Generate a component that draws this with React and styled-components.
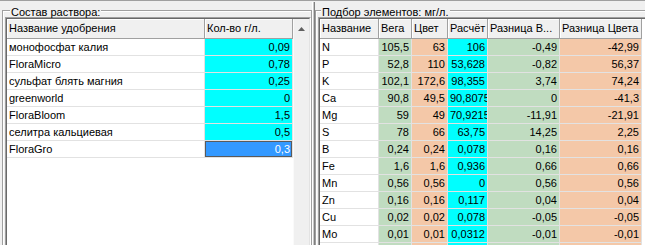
import React from 'react';
import styled, { createGlobalStyle } from 'styled-components';

const GlobalStyle = createGlobalStyle`
  body{
    margin: 0;
    background: #f0f0f0;
    font-family: "Liberation Sans", Arial, sans-serif;
    font-size: 11px;
    color: #000000;
  }
`

const colors = {
  cyan: '#00ffff',
  green: '#c0dcc0',
  peach: '#f4c8a8',
  white: '#ffffff',
}

const WindowStyle = styled.div`
  width: 645px;
  height: 245px;
  box-sizing: border-box;
  overflow: hidden;
  display: flex;
  align-items: flex-start;
  padding: 1px 0 0 2px;
  border-top: 1px solid #a0a0a0;
  background: #f0f0f0;
`

const GroupBox = styled.fieldset`
  flex: none;
  box-sizing: border-box;
  width: ${({ $width }) => $width}px;
  height: 270px;
  margin: 0;
  padding: 0 0 0 ${({ $pad }) => $pad}px;
  min-width: 0;
  border: 1px solid #a0a0a0;
  box-shadow: inset 1px 1px 0 #ffffff;
`

const GroupTitle = styled.legend`
  margin-left: ${({ $offset }) => $offset}px;
  padding: 4px 1px 0;
  line-height: 12px;
  background: #f0f0f0;
`

const Splitter = styled.div`
  flex: none;
  align-self: stretch;
  width: 3px;
  box-sizing: border-box;
  border-left: 1px solid #ffffff;
  border-right: 1px solid #808080;
  background: #c8c8c8;
`

const GridFrame = styled.div`
  display: flex;
  box-sizing: border-box;
  margin-top: -1px;
  height: 240px;
  border: 1px solid;
  border-color: #a0a0a0 #ffffff #ffffff #a0a0a0;
`

const GridInner = styled.div`
  display: flex;
  flex: 1;
  min-width: 0;
  background: #ffffff;
  border: 1px solid;
  border-color: #696969 #e3e3e3 #e3e3e3 #696969;
`

const Table = styled.div`
  flex: none;
  display: grid;
  grid-template-columns: ${({ $cols }) => $cols.map(c => c + 'px').join(' ')};
  grid-template-rows: 20px;
  grid-auto-rows: 17px;
  align-content: start;
`

const Cell = styled.div`
  box-sizing: border-box;
  padding: 0 2px;
  line-height: 16px;
  white-space: nowrap;
  overflow: hidden;
  text-align: ${({ $align }) => $align || 'left'};
  background: ${({ $bg }) => $bg || colors.white};
  border-right: 1px solid #e2e2e2;
  border-bottom: 1px solid #e2e2e2;
`

const HeadCell = styled(Cell)`
  background: #f0f0f0;
  line-height: 19px;
  border-right-color: #a0a0a0;
  border-bottom-color: #a0a0a0;
  box-shadow: inset 1px 1px 0 #ffffff;
`

const SelectedCell = styled(Cell)`
  background: #3399ff;
  color: #ffffff;
  box-shadow: inset 0 0 0 1px #5a5a5a;
`

const ScrollBar = styled.div`
  flex: none;
  width: 16px;
  box-sizing: border-box;
  background: #f0f0f0;
  border-left: 1px solid #fafafa;
`

const ScrollBtn = styled.div`
  height: 20px;
  display: flex;
  align-items: center;
  justify-content: center;
`

const fertilizers = [
  ['монофосфат калия', '0,09'],
  ['FloraMicro', '0,78'],
  ['сульфат блять магния', '0,25'],
  ['greenworld', '0'],
  ['FloraBloom', '1,5'],
  ['селитра кальциевая', '0,5'],
  ['FloraGro', '0,3'],
]

const elementHeaders = ['Название', 'Вега', 'Цвет', 'Расчёт', 'Разница В...', 'Разница Цвета']
const elementColors = [colors.white, colors.green, colors.peach, colors.cyan, colors.green, colors.peach]

// last row only peeks in at the bottom edge, its text is below the picture
const elements = [
  ['N', '105,5', '63', '106', '-0,49', '-42,99'],
  ['P', '52,8', '110', '53,628', '-0,82', '56,37'],
  ['K', '102,1', '172,6', '98,355', '3,74', '74,24'],
  ['Ca', '90,8', '49,5', '90,8075', '0', '-41,3'],
  ['Mg', '59', '49', '70,9215', '-11,91', '-21,91'],
  ['S', '78', '66', '63,75', '14,25', '2,25'],
  ['B', '0,24', '0,24', '0,078', '0,16', '0,16'],
  ['Fe', '1,6', '1,6', '0,936', '0,66', '0,66'],
  ['Mn', '0,56', '0,56', '0', '0,56', '0,56'],
  ['Zn', '0,16', '0,16', '0,117', '0,04', '0,04'],
  ['Cu', '0,02', '0,02', '0,078', '-0,05', '-0,05'],
  ['Mo', '0,01', '0,01', '0,0312', '-0,01', '-0,01'],
  ['', '', '', '', '', ''],
]

function SolutionGrid(){
  const lastRow = fertilizers.length - 1
  return(
    <GridFrame>
      <GridInner>
        <Table $cols={[198, 88]}>
          <HeadCell>Название удобрения</HeadCell>
          <HeadCell>Кол-во г/л.</HeadCell>
          {fertilizers.map(([name, amount], i) => (
            <React.Fragment key={name}>
              <Cell>{name}</Cell>
              {i === lastRow
                ? <SelectedCell $align="right">{amount}</SelectedCell>
                : <Cell $align="right" $bg={colors.cyan}>{amount}</Cell>}
            </React.Fragment>
          ))}
        </Table>
        <ScrollBar>
          <ScrollBtn>
            <svg width="7" height="4" viewBox="0 0 7 4">
              <polygon points="3.5,0 7,4 0,4" fill="#606060" />
            </svg>
          </ScrollBtn>
        </ScrollBar>
      </GridInner>
    </GridFrame>
  )
}

function ElementsGrid(){
  return(
    <GridFrame>
      <GridInner>
        <Table $cols={[59, 33, 36, 40, 72, 82]}>
          {elementHeaders.map(title => <HeadCell key={title}>{title}</HeadCell>)}
          {elements.map((row, r) => row.map((value, col) => (
            <Cell
              key={r + '-' + col}
              $align={col === 0 ? 'left' : 'right'}
              $bg={elementColors[col]}
            >
              {value}
            </Cell>
          )))}
        </Table>
      </GridInner>
    </GridFrame>
  )
}

export default function App(){
  return(
    <>
      <GlobalStyle />
      <WindowStyle>
        <GroupBox $width={310} $pad={2}>
          <GroupTitle $offset={5}>Состав раствора:</GroupTitle>
          <SolutionGrid />
        </GroupBox>
        <Splitter />
        <GroupBox $width={340} $pad={2}>
          <GroupTitle $offset={3}>Подбор элементов: мг/л.</GroupTitle>
          <ElementsGrid />
        </GroupBox>
      </WindowStyle>
    </>
  )
}
